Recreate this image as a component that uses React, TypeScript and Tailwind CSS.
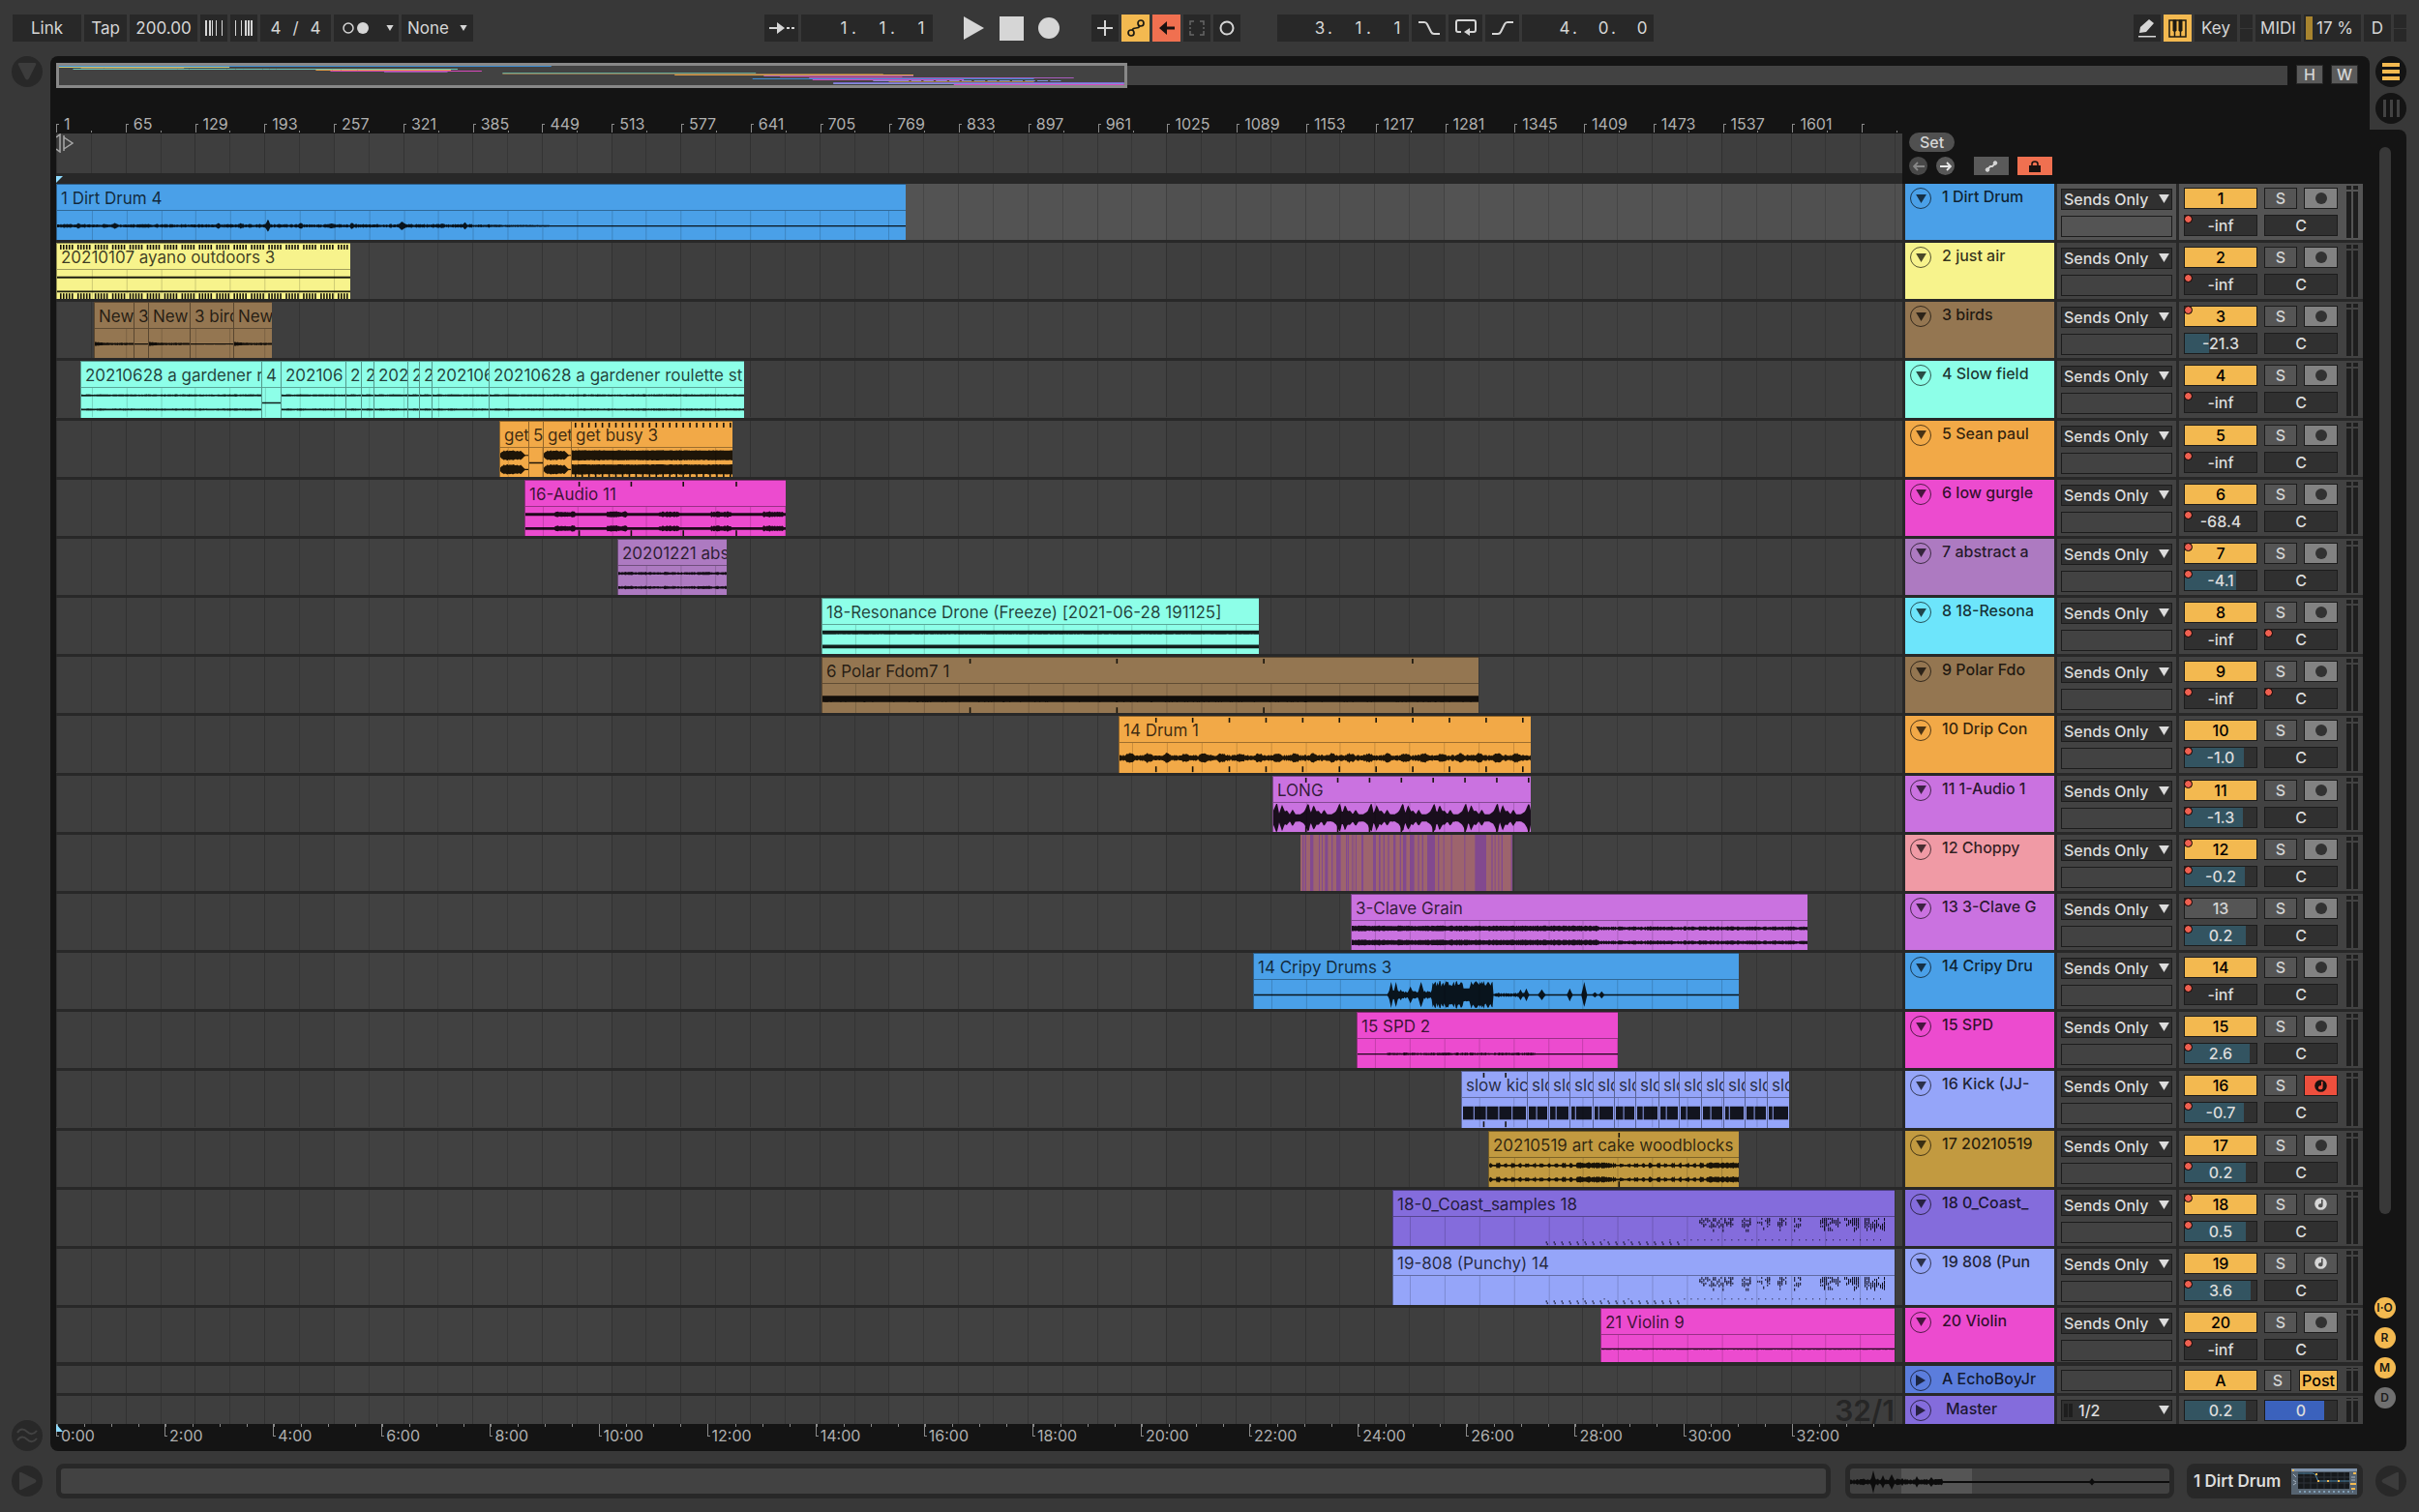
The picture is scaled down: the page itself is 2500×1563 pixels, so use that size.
import React from 'react';

/* ---------- time line geometry ---------- */

const LANE = 1908;
const CELL = 35.85;
const ORIGIN = 59;
const pct = (x: number) => `${((x - 58) / LANE) * 100}%`;

/* deterministic noise in the range 0..1 */
const noise = (n: number) => {
  const v = Math.sin(n * 127.1 + 11.7) * 43758.5453;
  return v - Math.floor(v);
};

type Amp = (x: number) => number;
type Wave = { stereo?: boolean; amp: Amp };
type Clip = { from: number; to: number; label: string; wave?: Wave; midi?: boolean; blocks?: boolean; color?: string; ticks?: number[] };
type Track = {
  name: string;
  num: string;
  color: string;
  vol: string;
  fill?: number;
  dots?: string;
  off?: boolean;
  rec?: 'audio' | 'midi' | 'armed';
  clips: Clip[];
  choppy?: boolean;
};

const line: Wave = { amp: () => 0.8 };
const lineStereo: Wave = { stereo: true, amp: (x) => 0.8 + noise(x * 0.7) * 0.4 };
const every = (from: number, to: number, step: number) => {
  const out: number[] = [];
  for (let x = from; x < to; x += step) out.push(x);
  return out;
};

/* straight-line interpolation through [x, height] points */
const through = (points: [number, number][], x: number) => {
  for (let i = 0; i < points.length - 1; i++) {
    const [a, u] = points[i];
    const [b, v] = points[i + 1];
    if (x >= a && x <= b) return u + ((v - u) * (x - a)) / (b - a);
  }
  return 1;
};

const dirtBumps: [number, number, number][] = [[22, 3, 5], [48, 2, 4], [60, 3.6, 5], [86, 2, 6], [140, 2, 8], [167, 3, 5], [190, 3, 6], [218, 8, 3], [252, 3.4, 5], [284, 3, 9], [305, 4, 3], [357, 5.5, 5], [376, 2, 4], [398, 3, 4], [422, 4, 4], [447, 2, 4]];
const dirt: Amp = (x) => {
  let a = x < 430 ? 0.9 + noise(x) * 1.2 : x < 510 ? 0.8 + noise(x) * 0.8 * (1 - (x - 430) / 90) : 0.7;
  for (const [c, h, w] of dirtBumps) if (Math.abs(x - c) < w) a = Math.max(a, h * (1 - Math.abs(x - c) / w) * (0.8 + noise(x) * 0.3));
  return a;
};
const cripySpikes: [number, number, number][] = [[142, 14, 3], [147, 14, 3], [152, 6, 3], [162, 9, 4], [173, 14, 4], [187, 13, 5], [276, 6, 3], [282, 7, 3], [298, 6, 4], [327, 7, 3], [342, 14, 3], [353, 3, 3], [360, 4, 3]];
const cripy: Amp = (x) => {
  let a = 0.8;
  for (const [c, h, w] of cripySpikes) if (Math.abs(x - c) < w) a = Math.max(a, h * (1 - Math.abs(x - c) / w));
  if (x > 138 && x < 184) a = Math.max(a, 2 + noise(x) * 2.5);
  if (x > 184 && x < 217) a = Math.max(a, 9 + noise(x) * 6);
  if (x >= 217 && x < 224) a = 7;
  if (x >= 224 && x < 248) a = 10 + noise(x) * 5;
  if (x > 248 && x < 280) a = Math.max(a, 1 + noise(x) * 1.5);
  return a;
};
const longAmp: Amp = (x) => through([[0, 8], [3, 15], [4, 15], [6, 5], [9, 14], [12, 7], [14, 8], [17, 4], [20, 9], [23, 4], [28, 4], [31, 6], [33, 8]], x % 32.7);
const blob: Amp = (x) => (x < 3 ? 2 + x : x < 23 ? 4 + noise(x) * 1.4 : Math.max(0.6, 4 - (x - 23)));

const kick = [1510, 1578, 1600, 1622, 1646, 1668, 1690, 1714, 1735, 1758, 1781, 1803, 1826, 1849];
const gardener = [83, 270, 290, 357, 373, 386, 421, 433, 446, 505, 769];
const gardenerLabels = ['20210628 a gardener r', '4', '202106', '2', '2', '202', '2', '2', '202106', '20210628 a gardener roulette st'];
const birds: [number, number, string][] = [[97, 138, 'New'], [138, 153, '3'], [153, 196, 'New'], [196, 241, '3 bird'], [241, 281, 'New']];

const tracks: Track[] = [
  { num: '1', name: '1 Dirt Drum', color: 'bg-[#4aa0e8]', vol: '-inf', dots: 'v', clips: [{ from: 58, to: 936, label: '1 Dirt Drum 4', wave: { amp: dirt } }] },
  { num: '2', name: '2 just air', color: 'bg-[#f7f38c]', vol: '-inf', dots: 'v', clips: [{ from: 58, to: 362, label: '20210107 ayano outdoors 3', wave: { stereo: true, amp: () => 1 }, ticks: every(61, 361, 3).filter((_, i) => i % 6 !== 5) }] },
  {
    num: '3', name: '3 birds', color: 'bg-[#947651]', vol: '-21.3', fill: 34, dots: 'm',
    clips: birds.map(([from, to, label]) => ({ from, to, label, wave: { amp: (x: number) => (label === 'New' ? Math.max(0.8, 1.8 - x / 10) + noise(x) * 0.6 : 0.6) } })),
  },
  { num: '4', name: '4 Slow field', color: 'bg-[#8dffe8]', vol: '-inf', dots: 'v', clips: gardenerLabels.map((label, i) => ({ from: gardener[i], to: gardener[i + 1], label, wave: i === 1 ? line : lineStereo })) },
  {
    num: '5', name: '5 Sean paul', color: 'bg-[#f2a947]', vol: '-inf', dots: 'v',
    clips: [
      { from: 516, to: 546, label: 'get', wave: { stereo: true, amp: blob } },
      { from: 546, to: 561, label: '5', wave: line },
      { from: 561, to: 590, label: 'get', wave: { stereo: true, amp: blob } },
      { from: 590, to: 757, label: 'get busy 3', wave: { stereo: true, amp: (x) => 5 + noise(x) * 0.6 }, ticks: every(593, 757, 7) },
    ],
  },
  { num: '6', name: '6 low gurgle', color: 'bg-[#ec4bcf]', vol: '-68.4', dots: 'v', clips: [{ from: 542, to: 812, label: '16-Audio 11', wave: { stereo: true, amp: (x) => ((x + 22) % 54 > 52 || (x + 22) % 54 < 20 ? 2 + noise(x) * 1.4 : 1.5) }, ticks: [597, 651, 705, 760] }] },
  { num: '7', name: '7 abstract a', color: 'bg-[#ad7ac1]', vol: '-4.1', fill: 71, dots: 'mv', clips: [{ from: 638, to: 751, label: '20201221 abs', wave: { stereo: true, amp: (x) => 0.8 + noise(x) * 1 } }] },
  { num: '8', name: '8 18-Resona', color: 'bg-[#6de5fb]', vol: '-inf', dots: 'vp', clips: [{ from: 849, to: 1301, label: '18-Resonance Drone (Freeze) [2021-06-28 191125]', color: 'bg-[#8dffe8]', wave: { stereo: true, amp: () => 2 } }] },
  { num: '9', name: '9 Polar Fdo', color: 'bg-[#947651]', vol: '-inf', dots: 'vp', clips: [{ from: 849, to: 1528, label: '6 Polar Fdom7 1', wave: { amp: () => 3.5 }, ticks: [1001, 1153, 1305, 1459] }] },
  { num: '10', name: '10 Drip Con', color: 'bg-[#f2a947]', vol: '-1.0', fill: 82, dots: 'v', clips: [{ from: 1156, to: 1582, label: '14 Drum 1', wave: { amp: (x) => 1.8 + noise(x) * 1.8 + Math.max(0, Math.sin((x - 6) / 3.03)) * 2 }, ticks: every(1193, 1580, 38) }] },
  { num: '11', name: '11 1-Audio 1', color: 'bg-[#ca72e0]', vol: '-1.3', fill: 81, dots: 'mv', clips: [{ from: 1315, to: 1582, label: 'LONG', wave: { amp: longAmp }, ticks: every(1348, 1580, 33) }] },
  { num: '12', name: '12 Choppy', color: 'bg-[#f09aa5]', vol: '-0.2', fill: 84, dots: 'mv', choppy: true, clips: [] },
  { num: '13', name: '13 3-Clave G', color: 'bg-[#ca72e0]', vol: '0.2', fill: 85, dots: 'mv', off: true, clips: [{ from: 1396, to: 1868, label: '3-Clave Grain', wave: { stereo: true, amp: (x) => (x < 256 ? 2.2 + noise(x) * 1 : 1.1 + noise(x) * 1.3) } }] },
  { num: '14', name: '14 Cripy Dru', color: 'bg-[#4aa0e8]', vol: '-inf', dots: 'v', clips: [{ from: 1295, to: 1797, label: '14 Cripy Drums 3', wave: { amp: cripy } }] },
  { num: '15', name: '15 SPD', color: 'bg-[#ec4bcf]', vol: '2.6', fill: 91, dots: 'v', clips: [{ from: 1402, to: 1672, label: '15 SPD 2', wave: { amp: (x) => (x > 30 && x < 185 ? 0.7 + noise(x) * 0.9 : 0.7) } }] },
  { num: '16', name: '16 Kick (JJ-', color: 'bg-[#95a5f9]', vol: '-0.7', fill: 83, dots: 'v', rec: 'armed', clips: kick.slice(0, -1).map((from, i) => ({ from, to: kick[i + 1], label: i === 0 ? 'slow kic' : 'slo', blocks: true, ticks: i === 0 ? [1532, 1555] : undefined })) },
  { num: '17', name: '17 20210519', color: 'bg-[#c29a40]', vol: '0.2', fill: 85, dots: 'v', clips: [{ from: 1538, to: 1797, label: '20210519 art cake woodblocks', wave: { stereo: true, amp: (x) => ((x > 92 && x < 128) || x > 225 ? 2 + noise(x) * 1.5 : Math.sin(x / 1.2) > 0.1 ? 1.2 + noise(x) * 2.2 : 0.9) }, ticks: [1672] }] },
  { num: '18', name: '18 0_Coast_', color: 'bg-[#846cdc]', vol: '0.5', fill: 85, dots: 'mv', rec: 'midi', clips: [{ from: 1439, to: 1958, label: '18-0_Coast_samples 18', midi: true }] },
  { num: '19', name: '19 808 (Pun', color: 'bg-[#95a5f9]', vol: '3.6', fill: 92, dots: 'v', rec: 'midi', clips: [{ from: 1439, to: 1958, label: '19-808 (Punchy) 14', midi: true }] },
  { num: '20', name: '20 Violin', color: 'bg-[#ec4bcf]', vol: '-inf', dots: 'v', clips: [{ from: 1654, to: 1958, label: '21 Violin 9', wave: line }] },
];

/* ---------- drawings ---------- */

function Grid() {
  const cells = Math.ceil(LANE / CELL);
  return (
    <svg className="absolute inset-0 size-full" viewBox={`0 0 ${LANE} 10`} preserveAspectRatio="none" shapeRendering="crispEdges" aria-hidden="true">
      {[1, 3, 5].map((k) => (
        <rect key={k} x={k * 8 * CELL} width={8 * CELL} height="10" fill="#fff" fillOpacity="0.02" />
      ))}
      {Array.from({ length: cells }, (_, k) => (
        <rect key={k} x={Math.round(k * CELL)} width="1" height="10" fill="#000" fillOpacity={k % 2 ? 0.15 : 0.2} />
      ))}
    </svg>
  );
}

function wavePath(w: number, cy: number, wave: Wave) {
  let top = '';
  let bottom = '';
  for (let x = 0; x <= w; x++) {
    const a = wave.amp(x);
    top += `${x ? 'L' : 'M'}${x} ${(cy - a).toFixed(1)}`;
    bottom = `L${x} ${(cy + a * (0.9 + noise(x + 5) * 0.1)).toFixed(1)}` + bottom;
  }
  return top + bottom + 'Z';
}

const midiGroups = [[315, 352], [361, 371], [377, 390], [398, 408], [415, 423], [442, 463], [467, 482], [488, 510]];

function MidiNotes() {
  const dots: React.ReactNode[] = [];
  for (let i = 0; i < 18; i++) {
    const x = 158 + i * 8;
    dots.push(<rect key={`a${i}`} x={x} y={26} width="1" height="2" />, <rect key={`b${i}`} x={x + 1} y={28} width="1" height="2" />);
  }
  for (let i = 0; i < 30; i++) dots.push(<rect key={`c${i}`} x={301 + i * 7} y={24} width="1" height="1" />);
  [196, 218, 243, 286].forEach((x) => dots.push(<rect key={`d${x}`} x={x} y={24} width="1" height="1" />));
  midiGroups.forEach(([a, b], g) => {
    const dense = g > 4;
    for (let x = a; x < b; x += 2) {
      for (let y = 1; y < 15; y += 2) {
        if (noise(x * 3.1 + y * 7.7) > (dense ? 0.4 : 0.55) && y < 7 + noise(x) * 10) dots.push(<rect key={`${x}-${y}`} x={x} y={y} width="1" height={noise(x + y) > 0.5 ? 3 : 2} />);
      }
    }
  });
  return <g fill="#0b0a18">{dots}</g>;
}

function Waveform({ clip }: { clip: Clip }) {
  const w = clip.to - clip.from;
  const lines: number[] = [];
  for (let k = 0; k * CELL < LANE; k++) {
    const x = Math.round(58 + k * CELL) - clip.from;
    if (x > 0 && x < w) lines.push(x);
  }
  return (
    <svg className="block min-h-0 w-full flex-1" viewBox={`0 0 ${w} 31`} preserveAspectRatio="none" aria-hidden="true">
      {lines.map((x) => (
        <rect key={x} x={x} width="1" height="31" fill="#000" fillOpacity="0.17" />
      ))}
      <g fill="#000" fillOpacity="0.88">
        {clip.wave && !clip.wave.stereo && <path d={wavePath(w, 16, clip.wave)} />}
        {clip.wave && clip.wave.stereo && (
          <>
            <path d={wavePath(w, 8, clip.wave)} />
            <path d={wavePath(w, 23, clip.wave)} />
          </>
        )}
        {clip.blocks && (w > 30 ? [1, 13, 26, 39, 53] : [1, 10 - (clip.from % 3) * 2]).map((x, i, all) => {
          const next = i + 1 < all.length ? all[i + 1] : w;
          return <rect key={x} x={x} y="9" width={next - x - 1} height="14" />;
        })}
      </g>
      {clip.midi && <MidiNotes />}
    </svg>
  );
}

function WarpTicks({ clip }: { clip: Clip }) {
  const w = clip.to - clip.from;
  return (
    <svg className="absolute inset-0 size-full" viewBox={`0 0 ${w} 58`} preserveAspectRatio="none" aria-hidden="true">
      {(clip.ticks ?? []).map((x) => (
        <g key={x} fill="#15120a">
          <rect x={x - clip.from} y="1" width="1.6" height="5" />
          <rect x={x - clip.from} y="52" width="1.6" height="6" />
        </g>
      ))}
    </svg>
  );
}

const chops = [[198, 202], [206, 210], [222, 232], [249, 252], [258, 261], [268, 277], [288, 292], [303, 317], [333, 337], [339, 342], [351, 353], [356, 358], [363, 366], [381, 387], [417, 426], [435, 440], [449, 453], [463, 467], [480, 487], [500, 504], [510, 520], [531, 545], [556, 560], [569, 573], [585, 609], [618, 622], [635, 638], [659, 662], [700, 703], [733, 768], [784, 788], [794, 797], [805, 808], [815, 819], [845, 849]];

function ChoppyClips() {
  return (
    <div className="absolute inset-y-0 bg-[#9d646d]" style={{ left: pct(1344), width: `${(219 / LANE) * 100}%` }}>
      <svg className="size-full" viewBox="192 0 657 58" preserveAspectRatio="none" aria-hidden="true">
        {chops.map(([a, b]) => (
          <rect key={a} x={a} width={b - a} height="58" fill="#82498f" />
        ))}
      </svg>
    </div>
  );
}

const Caret = ({ className }: { className: string }) => (
  <svg className={className} viewBox="0 0 12 10" fill="currentColor" aria-hidden="true">
    <path d="M0 0h12L6 10z" />
  </svg>
);

/* ---------- top bar ---------- */

const cell = 'flex h-7 shrink-0 items-center justify-center bg-[#282828] text-[17px] leading-5 text-[#d6d6d6]';

function Position({ parts, label }: { parts: string[]; label: string }) {
  return (
    <div role="group" aria-label={label} className="flex h-7 w-[136px] shrink-0 items-center justify-end bg-[#282828] pr-1.5 text-[17px] leading-5 text-[#d6d6d6]">
      {parts.map((p, i) => (
        <React.Fragment key={i}>
          <span className="w-3 text-center">{p}</span>
          {i < 2 && <span className="w-7 pl-0.5 text-left">.</span>}
        </React.Fragment>
      ))}
    </div>
  );
}

function Metronome({ flip }: { flip?: boolean }) {
  const xs = flip ? [1, 7, 11, 14, 17] : [1, 5, 8, 12, 18];
  return (
    <svg width="20" height="16" viewBox="0 0 20 16" fill="#d6d6d6" aria-hidden="true">
      {xs.map((x, i) => (
        <rect key={x} x={x} width={flip ? (i > 1 ? 2 : 1) : i < 2 ? 2 : 1} height="16" />
      ))}
    </svg>
  );
}

function TopBar() {
  return (
    <header className="flex h-[58px] shrink-0 items-start px-[13px] pt-[15px]">
      <div className="flex gap-[3px]">
        <button className={`${cell} w-[71px]`}>Link</button>
        <button className={`${cell} w-11`}>Tap</button>
        <button className={`${cell} w-[70px]`}>200.00</button>
        <button className={`${cell} w-[28px]`} aria-label="Nudge down"><Metronome /></button>
        <button className={`${cell} w-[28px]`} aria-label="Nudge up"><Metronome flip /></button>
        <div className={`${cell} w-[73px] gap-3`}><span>4</span><span>/</span><span>4</span></div>
        <button className={`${cell} w-[67px] gap-[17px] pl-1`} aria-label="Metronome">
          <svg width="28" height="12" viewBox="0 0 28 12" aria-hidden="true">
            <circle cx="6" cy="6" r="5" fill="none" stroke="#d6d6d6" strokeWidth="1.5" />
            <circle cx="21" cy="6" r="6" fill="#d6d6d6" />
          </svg>
          <Caret className="h-1.5 w-2" />
        </button>
        <div className="relative w-[74px]">
          <select aria-label="Quantization" className="h-7 w-full appearance-none bg-[#282828] pl-1.5 text-[17px] leading-5 text-[#d6d6d6]">
            <option>None</option>
          </select>
          <Caret className="pointer-events-none absolute top-[11px] right-1.5 h-1.5 w-2 text-[#d6d6d6]" />
        </div>
      </div>
      <div className="flex-[301]" />
      <div className="flex items-center">
        <button className={`${cell} mr-[3px] w-[35px]`} aria-label="Follow">
          <svg width="26" height="14" viewBox="0 0 26 14" fill="#d6d6d6" aria-hidden="true">
            <path d="M0 6h8V1l8 6-8 6V8H0zM18 6h3v2h-3zM23 6h3v2h-3z" />
          </svg>
        </button>
        <Position label="Arrangement position" parts={['1', '1', '1']} />
        <button className="ml-8" aria-label="Play">
          <svg width="22" height="26" viewBox="0 0 22 26" fill="#d6d6d6" aria-hidden="true"><path d="M0 1l21 12L0 25z" /></svg>
        </button>
        <button className="ml-[15px]" aria-label="Stop">
          <span className="block h-[25px] w-[25px] bg-[#d6d6d6]" />
        </button>
        <button className="ml-[15px]" aria-label="Record">
          <span className="block size-[22px] rounded-full bg-[#d6d6d6]" />
        </button>
        <div className="ml-[33px] flex gap-[3px]">
          <button className={`${cell} w-7`} aria-label="Overdub">
            <svg width="16" height="16" viewBox="0 0 16 16" fill="#d6d6d6" aria-hidden="true"><path d="M7 0h2v7h7v2H9v7H7V9H0V7h7z" /></svg>
          </button>
          <button className="flex h-7 w-[29px] items-center justify-center bg-[#f3b950]" aria-label="Automation arm">
            <svg width="20" height="20" viewBox="0 0 20 20" fill="none" stroke="#1c1a12" strokeWidth="1.7" aria-hidden="true">
              <circle cx="5" cy="15" r="3" /><circle cx="15" cy="5" r="3" /><path d="M6 12c1-2 2-2 4-2s3 0 4-2" />
            </svg>
          </button>
          <button className="flex h-7 w-[29px] items-center justify-center bg-[#f07050]" aria-label="Re-enable automation">
            <svg width="16" height="14" viewBox="0 0 16 14" fill="#1a1210" aria-hidden="true"><path d="M0 7l8-7v5.500h8v3H8V14z" /></svg>
          </button>
          <button className={`${cell} w-7`} aria-label="Capture">
            <svg width="16" height="16" viewBox="0 0 16 16" fill="none" stroke="#656565" strokeWidth="1.5" aria-hidden="true"><path d="M1 5V1h4M11 1h4v4M15 11v4h-4M5 15H1v-4M1 7v2M15 7v2" /></svg>
          </button>
          <button className={`${cell} w-7`} aria-label="Session record">
            <svg width="16" height="16" viewBox="0 0 16 16" fill="none" stroke="#d6d6d6" strokeWidth="2" aria-hidden="true"><circle cx="8" cy="8" r="6.500" /></svg>
          </button>
        </div>
        <div className="ml-[38px] flex gap-[3px]">
          <Position label="Loop start" parts={['3', '1', '1']} />
          <button className={`${cell} w-[35px]`} aria-label="Punch in">
            <svg width="22" height="14" viewBox="0 0 22 14" fill="none" stroke="#d6d6d6" strokeWidth="2" aria-hidden="true"><path d="M0 1h6q2 0 3 2l4 8q1 2 3 2h6" /></svg>
          </button>
          <button className={`${cell} w-[35px]`} aria-label="Loop">
            <svg width="22" height="18" viewBox="0 0 22 18" fill="none" stroke="#d6d6d6" strokeWidth="2" aria-hidden="true">
              <path d="M6 13H3q-2 0-2-2V3q0-2 2-2h16q2 0 2 2v8q0 2-2 2h-6" /><path d="M15 9v8l-6-4z" fill="#d6d6d6" stroke="none" />
            </svg>
          </button>
          <button className={`${cell} w-[35px]`} aria-label="Punch out">
            <svg width="22" height="14" viewBox="0 0 22 14" fill="none" stroke="#d6d6d6" strokeWidth="2" aria-hidden="true"><path d="M0 13h6q2 0 3-2l4-8q1-2 3-2h6" /></svg>
          </button>
          <Position label="Loop length" parts={['4', '0', '0']} />
        </div>
      </div>
      <div className="flex-[496]" />
      <div className="flex gap-[3px]">
        <button className={`${cell} w-7`} aria-label="Draw mode">
          <svg width="20" height="20" viewBox="0 0 20 20" fill="#d6d6d6" aria-hidden="true"><path d="M2 15l1-6 9-8 5 4-8 9zM1 18h18v1.500H1z" /></svg>
        </button>
        <button className="flex h-7 w-[29px] items-center justify-center bg-[#f3b950]" aria-label="Computer MIDI keyboard">
          <svg width="19" height="19" viewBox="0 0 19 19" fill="none" stroke="#1c1a12" strokeWidth="1.500" aria-hidden="true">
            <rect x="1" y="1" width="17" height="17" /><path d="M6.500 11v7M12.500 11v7" /><path d="M5 1h3v11H5zM11 1h3v11h-3z" fill="#1c1a12" strokeWidth="1" />
          </svg>
        </button>
        <button className={`${cell} w-11`}>Key</button>
        <span className="flex w-[13px] flex-col gap-px"><i className="flex-1 bg-[#282828]" /><i className="flex-1 bg-[#282828]" /></span>
        <button className={`${cell} w-[47px]`}>MIDI</button>
        <div className="flex h-7 w-[59px] items-center gap-1 bg-[#282828] p-0.5 text-[17px] leading-5 text-[#d6d6d6]">
          <span className="h-full w-[7px] shrink-0 bg-[#a8842f]" /><span className="whitespace-nowrap">17 %</span>
        </div>
        <button className={`${cell} w-7`}>D</button>
        <span className="flex w-[13px] flex-col gap-px"><i className="flex-1 bg-[#282828]" /><i className="flex-1 bg-[#282828]" /></span>
      </div>
    </header>
  );
}

/* ---------- overview and rulers ---------- */

const overviewColors: Record<string, string> = {
  'bg-[#4aa0e8]': '#3c8ed4', 'bg-[#f7f38c]': '#cfcb78', 'bg-[#947651]': '#947651', 'bg-[#8dffe8]': '#6fc4b4', 'bg-[#f2a947]': '#e0a048',
  'bg-[#ec4bcf]': '#d848bc', 'bg-[#ad7ac1]': '#9064a4', 'bg-[#6de5fb]': '#62a896', 'bg-[#ca72e0]': '#a85cbc', 'bg-[#f09aa5]': '#a0466c',
  'bg-[#95a5f9]': '#8290d8', 'bg-[#c29a40]': '#a08038', 'bg-[#846cdc]': '#7c68cc',
};

function Overview() {
  return (
    <div className="flex h-[33px] items-start pt-[7px] pr-3">
      <div className="relative h-[26px] flex-1 py-[3px]">
        <div className="h-5 bg-[#424242]" />
        <div className="absolute inset-y-0 left-0 w-[48%] border-[3px] border-[#888]">
          <svg className="size-full" viewBox="58 0 1900 20" preserveAspectRatio="none" aria-hidden="true">
            {tracks.map((t, i) => (t.choppy ? [{ from: 1344, to: 1562 }] : t.clips).map((c) => (
              <rect key={`${t.num}-${c.from}`} x={c.from} y={i} width={c.to - c.from - (t.num === '16' ? 4 : 0)} height="1" fill={overviewColors[t.color]} />
            )))}
          </svg>
        </div>
      </div>
      <div className="ml-[9px] flex gap-2 pt-0.5">
        <button className="h-5 w-7 border border-[#282828] bg-[#5a5a5a] text-base leading-[18px] font-medium text-[#d6d6d6]">H</button>
        <button className="h-5 w-7 border border-[#282828] bg-[#5a5a5a] text-base leading-[18px] font-medium text-[#d6d6d6]">W</button>
      </div>
    </div>
  );
}

function BarRuler() {
  return (
    <div className="relative h-[46px]">
      {Array.from({ length: 27 }, (_, i) => (
        <span key={i} className="absolute bottom-0 h-[9px] border-l border-[#8a8a8a]" style={{ left: pct(58 + i * 2 * CELL) }}>
          <i className="block h-px w-0.5 bg-[#8a8a8a]" />
        </span>
      ))}
      {Array.from({ length: 27 }, (_, i) => (
        <i key={i} className="absolute bottom-0 h-0.5 w-px bg-[#8a8a8a]" style={{ left: pct(58 + (i * 2 + 1) * CELL) }} />
      ))}
      {Array.from({ length: 26 }, (_, i) => (
        <span key={i} className="absolute top-[27px] ml-2 text-base leading-5 text-[#b0b0b0]" style={{ left: pct(58 + i * 2 * CELL) }}>{i * 64 + 1}</span>
      ))}
    </div>
  );
}

function TimeRuler() {
  return (
    <div className="flex h-7 shrink-0 pr-[483px]">
      <div className="relative flex-1">
        {Array.from({ length: 68 }, (_, i) => (
          <i key={i} className="absolute top-0 h-[3px] w-px bg-[#8a8a8a]" style={{ left: pct(ORIGIN + i * 28.02) }} />
        ))}
        {Array.from({ length: 17 }, (_, i) => (
          <span key={i} className="absolute top-0 h-[13px] w-[3px] border-b border-l border-[#8a8a8a]" style={{ left: pct(58 + i * 112.1) }} />
        ))}
        {Array.from({ length: 17 }, (_, i) => (
          <span key={i} className="absolute top-0.5 ml-1 text-base leading-5 text-[#b0b0b0]" style={{ left: pct(ORIGIN + i * 112.1) }}>{i * 2}:00</span>
        ))}
        <svg className="absolute top-0 left-0" width="7" height="8" viewBox="0 0 7 8" fill="#8fdcff" aria-hidden="true"><path d="M0 0l7 8H0z" /></svg>
      </div>
    </div>
  );
}

function Locators() {
  return (
    <div className="w-[481px] shrink-0 pt-[46px] pl-[5px]">
      <button className="block h-5 w-[47px] rounded-full bg-[#505050] text-base leading-5 font-medium text-[#d6d6d6]">Set</button>
      <div className="mt-[5px] flex items-center">
        <button className="flex size-[19px] items-center justify-center rounded-full bg-[#484848]" aria-label="Previous locator">
          <svg width="12" height="10" viewBox="0 0 12 10" fill="none" stroke="#888" strokeWidth="1.800" aria-hidden="true"><path d="M12 5H1M5 1L1 5l4 4" /></svg>
        </button>
        <button className="ml-[9px] flex size-[19px] items-center justify-center rounded-full bg-[#585858]" aria-label="Next locator">
          <svg width="12" height="10" viewBox="0 0 12 10" fill="none" stroke="#e8e8e8" strokeWidth="1.800" aria-hidden="true"><path d="M0 5h11M7 1l4 4-4 4" /></svg>
        </button>
        <button className="ml-5 flex h-[19px] w-9 items-center justify-center bg-[#5a5a5a]" aria-label="Automation mode">
          <svg width="14" height="12" viewBox="0 0 14 12" fill="#d6d6d6" stroke="#d6d6d6" aria-hidden="true"><circle cx="3" cy="9.500" r="1.800" /><circle cx="11" cy="2.500" r="1.800" /><path d="M3 9l3-3h2l3-3" strokeWidth="1.800" fill="none" /></svg>
        </button>
        <button className="ml-[9px] flex h-[19px] w-9 items-center justify-center bg-[#f07050]" aria-label="Lock envelopes">
          <svg width="12" height="12" viewBox="0 0 12 12" aria-hidden="true"><rect y="5" width="12" height="7" fill="#1a1210" /><path d="M3 5V3.500a3 2.500 0 0 1 6 0V5" fill="none" stroke="#1a1210" strokeWidth="1.600" /></svg>
        </button>
      </div>
    </div>
  );
}

/* ---------- tracks ---------- */

function Lane({ children, selected }: { children?: React.ReactNode; selected?: boolean }) {
  return (
    <div className={`relative mr-[3px] flex-1 overflow-hidden ${selected ? 'bg-[#505050]' : 'bg-[#3e3e3e]'}`}>
      <Grid />
      {children}
    </div>
  );
}

function ClipView({ clip, color }: { clip: Clip; color: string }) {
  return (
    <div
      className={`absolute inset-y-0 flex flex-col overflow-hidden border-t border-l border-black/40 ${clip.color ?? color}`}
      style={{ left: pct(clip.from), width: `${((clip.to - clip.from) / LANE) * 100}%` }}
    >
      <div className="h-[27px] shrink-0 overflow-hidden border-b border-black/35 pt-px pl-1 text-[17px] leading-[26px] whitespace-nowrap text-black/75">{clip.label}</div>
      <Waveform clip={clip} />
      {clip.ticks && <WarpTicks clip={clip} />}
    </div>
  );
}

const Dot = () => <i className="absolute -top-px -left-px size-[9px] rounded-full border border-black bg-[#f06050]" />;

const field = 'relative flex h-[22px] items-center justify-center border border-[#1c1c1c] text-base leading-5 font-medium';

function Header({ name, color, folded, indent }: { name: string; color: string; folded?: boolean; indent?: boolean }) {
  return (
    <div className={`mr-[3px] flex w-[154px] shrink-0 items-start overflow-hidden pl-[5px] ${indent ? 'gap-[15px]' : 'gap-[11px]'} ${color}`}>
      <button aria-label={`Unfold ${name}`} className="mt-1 flex size-[22px] shrink-0 items-center justify-center rounded-full border-[1.5px] border-black/65 text-black/70">
        <Caret className={folded ? 'h-2.5 w-3 -rotate-90' : 'h-[9px] w-[11px]'} />
      </button>
      <span className="pt-[3px] text-base leading-5 font-medium whitespace-nowrap text-black/80">{name}</span>
    </div>
  );
}

function Meters({ short }: { short?: boolean }) {
  return (
    <div className="ml-[9px] flex gap-0.5 py-0.5">
      {[0, 1].map((i) => (
        <div key={i} className="flex w-[5px] flex-col gap-0.5">
          <i className={`${short ? 'h-px' : 'h-1'} bg-[#1e1e1e]`} />
          <i className="flex-1 bg-[#1e1e1e]" />
        </div>
      ))}
    </div>
  );
}

function RecIcon({ kind }: { kind: 'audio' | 'midi' | 'armed' }) {
  if (kind === 'audio') return <i className="size-3 rounded-full bg-[#323232]" />;
  const disc = kind === 'armed' ? '#1a1210' : '#d6d6d6';
  const note = kind === 'armed' ? '#ee4f3d' : '#4f4f4f';
  return (
    <svg width="13" height="13" viewBox="0 0 13 13" aria-hidden="true">
      <circle cx="6.500" cy="6.500" r="6.300" fill={disc} />
      <path d="M7 2h1.600v6.200a2.300 2 0 1 1-1.600-1.900z" fill={note} />
    </svg>
  );
}

function Mixer({ t }: { t: Track }) {
  const rec = t.rec ?? 'audio';
  const recBg = { audio: 'bg-[#828282]', midi: 'bg-[#555]', armed: 'bg-[#ee4f3d]' }[rec];
  const dots = t.dots ?? '';
  return (
    <div className={`flex w-[190px] shrink-0 pl-[5px] ${t.num === '1' ? 'bg-[#545454]' : 'bg-[#424242]'}`}>
      <div className="flex flex-col gap-[6px] pt-1">
        <button aria-label={`Track ${t.num} activator`} className={`${field} w-[76px] ${t.off ? 'bg-[#555] text-[#d6d6d6]' : 'bg-[#f3b950] text-black'}`}>
          {t.num}
          {dots.includes('m') && <Dot />}
        </button>
        <div className={`${field} w-[76px] bg-[#303030] text-[#dcdcdc]`}>
          <i className="absolute inset-y-0 left-0 bg-[#335461]" style={{ width: `${t.fill ?? 0}%` }} />
          <span className="relative">{t.vol}</span>
          {dots.includes('v') && <Dot />}
        </div>
      </div>
      <div className="ml-[7px] flex w-[76px] flex-col gap-[6px] pt-1">
        <div className="flex justify-between">
          <button aria-label={`Solo ${t.name}`} className={`${field} w-[34px] bg-[#555] text-[#d6d6d6]`}>S</button>
          <button aria-label={`Arm ${t.name}`} className={`${field} w-[35px] ${recBg}`}><RecIcon kind={rec} /></button>
        </div>
        <div className={`${field} bg-[#303030] text-[#dcdcdc]`}>
          C
          {dots.includes('p') && <Dot />}
        </div>
      </div>
      <Meters />
    </div>
  );
}

function TrackRow({ t }: { t: Track }) {
  const first = t.num === '1';
  const last = t.num === '20';
  return (
    <div className={`flex overflow-hidden ${last ? 'h-[60px] shrink-0 pb-1' : 'min-h-0 flex-1 pb-[3px]'}`}>
      <Lane selected={first}>
        {t.clips.map((c) => <ClipView key={c.from} clip={c} color={t.color} />)}
        {t.choppy && <ChoppyClips />}
      </Lane>
      <Header name={t.name} color={t.color} />
      <div className={`mr-[3px] w-[123px] shrink-0 pt-[5px] pl-1 ${first ? 'bg-[#545454]' : 'bg-[#424242]'}`}>
        <div className="relative w-[115px]">
          <select aria-label={`${t.name} output`} className="block h-[22px] w-full appearance-none border border-[#1c1c1c] bg-[#303030] pb-px pl-0.5 text-base leading-5 font-medium text-[#dcdcdc]">
            <option>Sends Only</option>
          </select>
          <Caret className="pointer-events-none absolute top-[6px] right-[3px] h-[9px] w-[11px] text-[#dcdcdc]" />
        </div>
        <div className="mt-[6px] h-[22px] w-[115px] border border-[#1c1c1c]" />
      </div>
      <Mixer t={t} />
    </div>
  );
}

function ReturnRow() {
  return (
    <div className="flex h-[31px] shrink-0 pb-[3px]">
      <Lane />
      <Header name="A EchoBoyJr" color="bg-[#5b7ddd]" folded />
      <div className="mr-[3px] w-[123px] shrink-0 bg-[#424242] pt-1 pl-1">
        <div className="h-[22px] w-[115px] border border-[#1c1c1c]" />
      </div>
      <div className="flex w-[190px] shrink-0 bg-[#424242] pl-[5px]">
        <button className={`${field} mt-1 w-[76px] bg-[#f3b950] text-black`}>A</button>
        <div className="mt-1 ml-[7px] flex w-[76px] justify-between">
          <button className={`${field} w-7 bg-[#555] text-[#d6d6d6]`} aria-label="Solo A EchoBoyJr">S</button>
          <button className={`${field} w-10 bg-[#f3b950] text-black`}>Post</button>
        </div>
        <Meters short />
      </div>
    </div>
  );
}

function MasterRow() {
  return (
    <div className="flex h-[29px] shrink-0">
      <Lane>
        <span className="absolute right-2 bottom-0 text-3xl leading-7 font-semibold text-[#262626]">32/1</span>
      </Lane>
      <Header name="Master" color="bg-[#846cdc]" folded indent />
      <div className="mr-[3px] w-[123px] shrink-0 bg-[#424242] pt-1 pl-1">
        <div className="relative w-[115px]">
          <select aria-label="Master output" className="block h-[22px] w-full appearance-none border border-[#1c1c1c] bg-[#303030] pb-px pl-[17px] text-base leading-5 font-medium text-[#dcdcdc]">
            <option>1/2</option>
          </select>
          <span className="pointer-events-none absolute top-1 left-[3px] flex gap-px"><i className="h-3.5 w-1 bg-[#1e1e1e]" /><i className="h-3.5 w-1 bg-[#1e1e1e]" /></span>
          <Caret className="pointer-events-none absolute top-[6px] right-[3px] h-[9px] w-[11px] text-[#dcdcdc]" />
        </div>
      </div>
      <div className="flex w-[190px] shrink-0 bg-[#424242] pl-[5px]">
        <div className={`${field} mt-1 w-[76px] bg-[#303030] text-[#dcdcdc]`}>
          <i className="absolute inset-y-0 left-0 w-[85%] bg-[#335461]" /><span className="relative">0.2</span>
        </div>
        <div className={`${field} mt-1 ml-[7px] w-[76px] bg-[#303030] text-[#dcdcdc]`}>
          <i className="absolute inset-y-0 left-0 w-[83%] bg-[#3b62bd]" /><span className="relative">0</span>
        </div>
        <Meters short />
      </div>
    </div>
  );
}

/* ---------- side rails and status bar ---------- */

function LeftRail() {
  return (
    <div className="flex w-[52px] shrink-0 flex-col justify-between pl-3">
      <button aria-label="Show browser" className="flex size-8 items-center justify-center rounded-full bg-[#282828]">
        <svg width="20" height="20" viewBox="0 0 20 20" fill="#3c3c3c" aria-hidden="true"><path d="M2 1h16q2 0 1 2l-7 14q-2 3-4 0L1 3Q0 1 2 1z" /></svg>
      </button>
      <button aria-label="Groove pool" className="flex size-8 items-center justify-center rounded-full bg-[#282828]">
        <svg width="22" height="16" viewBox="0 0 22 16" fill="none" stroke="#424242" strokeWidth="2" aria-hidden="true"><path d="M1 5c3-5 7-4 10-1s7 3 10-1M1 13c3-5 7-4 10-1s7 3 10-1" /></svg>
      </button>
    </div>
  );
}

function RightRail() {
  return (
    <div className="flex w-[38px] shrink-0 flex-col">
      <div className="flex h-[76px] shrink-0 flex-col items-end gap-1.5">
        <button aria-label="Arrangement view" className="flex size-8 items-center justify-center rounded-full bg-[#141414]">
          <span className="flex w-[18px] flex-col gap-[3px]"><i className="h-1 bg-[#f3b950]" /><i className="h-1 bg-[#f3b950]" /><i className="h-1 bg-[#f3b950]" /></span>
        </button>
        <button aria-label="Session view" className="flex size-8 items-center justify-center rounded-full bg-[#141414]">
          <span className="flex h-[18px] gap-1"><i className="w-[3px] bg-[#424242]" /><i className="w-[3px] bg-[#424242]" /><i className="w-[3px] bg-[#424242]" /></span>
        </button>
      </div>
      <div className="flex flex-1 flex-col items-center rounded-r-lg bg-[#141414] pt-[18px] pr-[7px] pb-11">
        <div className="w-3 flex-1 rounded-full bg-[#383838]" />
        <div className="mt-[86px] flex flex-col gap-[9px]">
          {['I·O', 'R', 'M'].map((s) => (
            <button key={s} className="flex size-[22px] items-center justify-center rounded-full bg-[#f3b950] text-xs leading-4 font-semibold text-[#1c1a12]">{s}</button>
          ))}
          <button className="flex size-[22px] items-center justify-center rounded-full bg-[#707070] text-xs leading-4 font-semibold text-[#1c1c1c]">D</button>
        </div>
      </div>
    </div>
  );
}

const previewSpikes: [number, number, number][] = [[24, 12, 3], [34, 7, 3], [43, 8, 4], [54, 4, 3], [69, 6, 3], [84, 5, 4], [250, 4, 3]];
const previewAmp: Amp = (x) => {
  let a = 1;
  if (x < 96) a = 1 + noise(x) * 2 + (x > 10 ? 0.5 : 0);
  for (const [c, h, w] of previewSpikes) if (Math.abs(x - c) < w) a = Math.max(a, h * (1 - Math.abs(x - c) / w));
  return a;
};

function StatusBar() {
  return (
    <footer className="flex h-[63px] shrink-0 items-start pt-[13px] pr-[13px] pl-3">
      <button aria-label="Show detail view" className="mt-0.5 flex size-8 items-center justify-center rounded-full bg-[#282828]">
        <svg width="20" height="20" viewBox="0 0 20 20" fill="#3c3c3c" aria-hidden="true"><path d="M2 2q0-2 2-1l14 7q3 2 0 4L4 19q-2 1-2-1z" /></svg>
      </button>
      <div className="ml-3.5 h-9 flex-1 rounded-lg border-[5px] border-[#282828] bg-[#424242]" />
      <div className="ml-[15px] flex h-9 w-[340px] rounded-lg border-[5px] border-[#282828] bg-[#424242]">
        <div className="relative flex-1">
          <div className="absolute inset-y-0 left-[53px] w-[73px] bg-[#555]" />
          <svg className="absolute inset-0 size-full" viewBox="0 0 330 26" preserveAspectRatio="none" fill="#0c0c0c" aria-hidden="true">
            <path d={wavePath(330, 14, { amp: previewAmp })} />
          </svg>
        </div>
      </div>
      <div className="ml-[13px] flex h-9 w-[182px] items-center justify-between rounded-lg bg-[#282828] pr-1.5 pl-[7px]">
        <span className="text-[17px] leading-5 font-semibold whitespace-nowrap text-[#dcdcdc]">1 Dirt Drum</span>
        <svg width="68" height="27" viewBox="0 0 68 27" aria-hidden="true">
          <rect width="68" height="27" fill="#566370" /><rect width="68" height="3" fill="#7f93ab" />
          <rect x="7" y="4" width="53" height="17" fill="#16191c" />
          <path d="M13 4v17M20 4v17M27 4v17M34 4v17M41 4v17M48 4v17M55 4v17M7 9h53M7 15h53" stroke="#2c3238" strokeWidth="1" />
          <path d="M7 5h15q3 0 4 4t3 4h31" fill="none" stroke="#4f87a8" />
          <g fill="#f3b950"><rect x="1" y="1" width="2" height="2" /><rect x="25" y="5" width="2" height="2" /><rect x="27" y="12" width="2" height="2" /><rect x="37" y="12" width="2" height="2" /><rect x="48" y="12" width="2" height="2" /><rect x="61" y="15" width="6" height="2" /><rect x="62" y="20" width="4" height="2" /><rect x="64" y="4" width="3" height="2" /></g>
          <path d="M2 6l3 3M2 12l3 2M2 17l3-2M62 9h4M62 12h4" stroke="#a7b4c2" />
          <path d="M8 24h56" stroke="#7f9db4" strokeWidth="2" strokeDasharray="2 3" />
        </svg>
      </div>
      <button aria-label="Show device view" className="mt-0.5 ml-[13px] flex size-8 items-center justify-center rounded-full bg-[#282828]">
        <svg width="20" height="20" viewBox="0 0 20 20" fill="#3c3c3c" aria-hidden="true"><path d="M18 2q0-2-2-1L2 8q-3 2 0 4l14 7q2 1 2-1z" /></svg>
      </button>
    </footer>
  );
}

export default function App() {
  return (
    <div className="flex h-screen flex-col overflow-hidden bg-[#383838] font-['Inter',sans-serif]">
      <TopBar />
      <main className="flex min-h-0 flex-1 pr-[13px]">
        <LeftRail />
        <section className="flex min-w-0 flex-1 flex-col rounded-l-lg rounded-tr-lg bg-[#141414] pl-[6px]">
          <Overview />
          <div className="flex h-[99px] shrink-0">
            <div className="min-w-0 flex-1">
              <BarRuler />
              <div className="relative mt-px mr-0.5 h-[41px] bg-[#3e3e3e]">
                <Grid />
                <svg className="absolute top-0 left-0" width="18" height="20" viewBox="0 0 18 20" fill="none" stroke="#a8a8a8" strokeWidth="1.500" aria-hidden="true"><path d="M0 4l4-3v18l-4-3M8 2v16M8 4l9 6-9 6" /></svg>
              </div>
              <div className="mr-0.5 h-[11px] bg-[#282828] pt-[3px]">
                <svg width="7" height="7" viewBox="0 0 7 7" fill="#8fdcff" aria-hidden="true"><path d="M0 0h7L0 7z" /></svg>
              </div>
            </div>
            <Locators />
          </div>
          <div className="mr-[7px] flex min-h-0 flex-1 flex-col bg-[#282828]">
            {tracks.map((t) => <TrackRow key={t.num} t={t} />)}
            <ReturnRow />
            <MasterRow />
          </div>
          <TimeRuler />
        </section>
        <RightRail />
      </main>
      <StatusBar />
    </div>
  );
}
